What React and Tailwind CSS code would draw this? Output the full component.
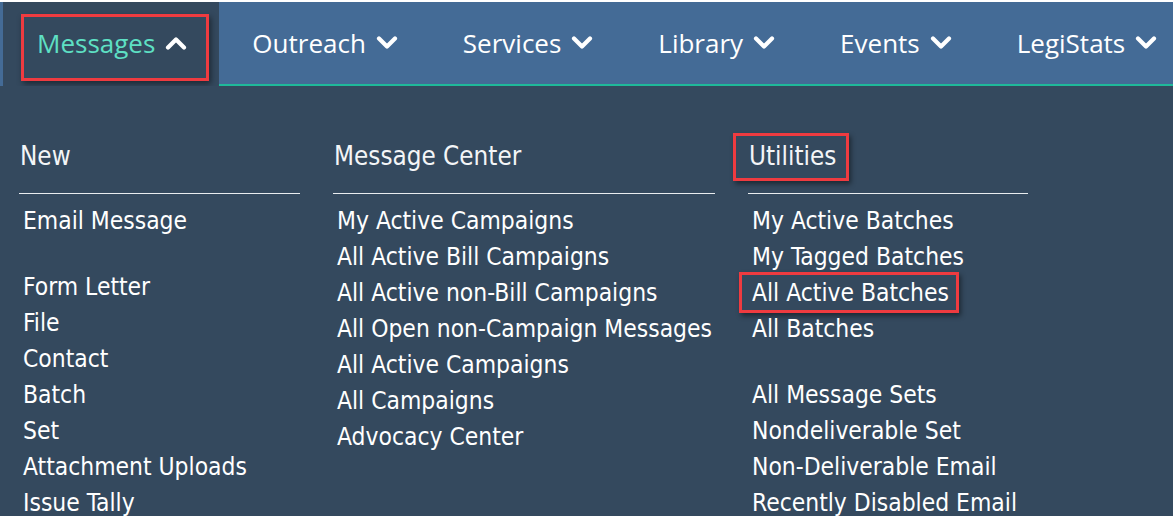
import React from "react";

function Chevron({ up }) {
  return (
    <svg width="22" height="14" viewBox="0 0 22 14" className="shrink-0">
      <path
        d={up ? "M3 11.5 L11 3.5 L19 11.5" : "M3 2.5 L11 10.5 L19 2.5"}
        fill="none"
        stroke="#ffffff"
        strokeWidth="4.2"
        strokeLinecap="round"
        strokeLinejoin="round"
      />
    </svg>
  );
}

const navItems = ["Outreach", "Services", "Library", "Events", "LegiStats"];

const FONT = { fontFamily: "'DejaVu Sans Condensed', 'DejaVu Sans', sans-serif" };

function Column({ title, items, width, titleBox, boxed }) {
  return (
    <div className="flex flex-col shrink-0" style={{ width }}>
      <div className="relative h-[36px] flex items-center pl-px text-[25.8px] text-[#f3f5f7]">
        {titleBox && (
          <div className="absolute left-[-15px] top-[-5px] w-[116px] h-[48px] border-[3px] border-[#ef3b40] shadow-[2px_3px_5px_rgba(0,0,0,0.45)]" />
        )}
        <span className="relative">{title}</span>
      </div>
      <div className="mt-[19px] h-px bg-[#e8ecef]" />
      <div className="mt-[9px] flex flex-col">
        {items.map((it, i) =>
          it === "" ? (
            <div key={i} className="h-[30px]" />
          ) : (
            <div key={i} className="relative h-[36px] flex items-center pl-[4px] text-[24.4px] text-white whitespace-nowrap">
              {boxed === it && (
                <div className="absolute left-[-9px] top-[-3px] w-[220px] h-[41px] border-[3px] border-[#ef3b40] shadow-[2px_3px_5px_rgba(0,0,0,0.45)]" />
              )}
              <span className="relative">{it}</span>
            </div>
          )
        )}
      </div>
    </div>
  );
}

export default function App() {
  return (
    <div className="w-[1173px] h-[516px] overflow-hidden bg-[#34495e] flex flex-col">
      <div className="h-[2px] bg-white shrink-0" />
      <div
        className="flex h-[84px] bg-[#446b96] pl-[3px] shrink-0 overflow-hidden"
        style={{ fontFamily: "'Open Sans', sans-serif" }}
      >
        <div className="relative flex items-center gap-[10px] pl-[34px] pr-[32px] bg-[#34495e] h-[84px] pb-[2px] shrink-0">
          <div className="absolute left-[18px] top-[12px] w-[188px] h-[67px] border-[3px] border-[#ef3b40] shadow-[2px_3px_6px_rgba(0,0,0,0.45)]" />
          <span className="relative text-[26px] text-[#5ee0c4]">Messages</span>
          <span className="relative"><Chevron up /></span>
        </div>
        {navItems.map((n, i) => (
          <div
            key={n}
            className={
              "flex items-center gap-[10px] pl-[33px] border-b-2 border-[#1fb99a] h-[84px] shrink-0 " +
              (i === navItems.length - 1 ? "pr-[40px] grow" : "pr-[32px]")
            }
          >
            <span className="text-[26px] text-white whitespace-nowrap">{n}</span>
            <Chevron />
          </div>
        ))}
      </div>
      <div className="flex pl-[19px] pt-[52px] gap-[33px]" style={FONT}>
        <Column
          title="New"
          width={281}
          items={["Email Message", "", "Form Letter", "File", "Contact", "Batch", "Set", "Attachment Uploads", "Issue Tally"]}
        />
        <Column
          title="Message Center"
          width={382}
          items={[
            "My Active Campaigns",
            "All Active Bill Campaigns",
            "All Active non-Bill Campaigns",
            "All Open non-Campaign Messages",
            "All Active Campaigns",
            "All Campaigns",
            "Advocacy Center",
          ]}
        />
        <Column
          title="Utilities"
          width={280}
          titleBox
          boxed="All Active Batches"
          items={[
            "My Active Batches",
            "My Tagged Batches",
            "All Active Batches",
            "All Batches",
            "",
            "All Message Sets",
            "Nondeliverable Set",
            "Non-Deliverable Email",
            "Recently Disabled Email",
          ]}
        />
      </div>
    </div>
  );
}
